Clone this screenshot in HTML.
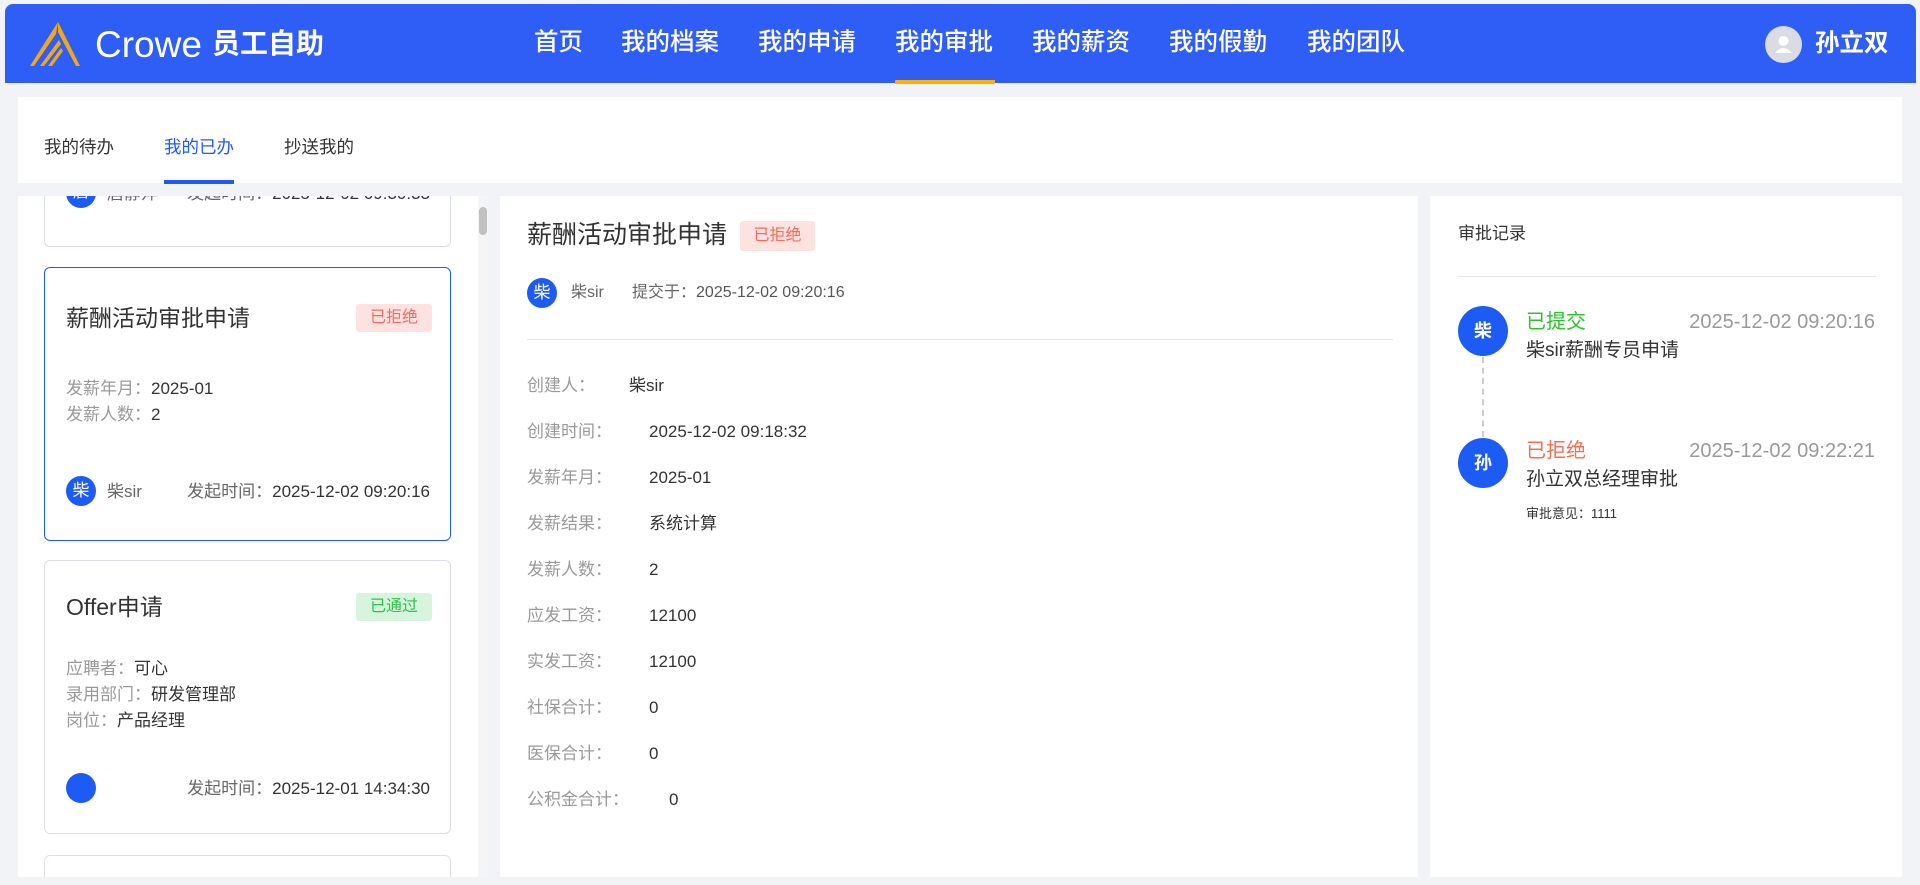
<!DOCTYPE html>
<html><head><meta charset="utf-8"><style>
*{margin:0;padding:0;box-sizing:border-box}
html,body{width:1920px;height:885px;overflow:hidden}
body{background:#f2f3f7;font-family:"Liberation Sans","Noto Sans CJK SC",sans-serif;position:relative;color:#333;line-height:1}
.a{position:absolute;white-space:nowrap}
.hdr{left:5px;top:4px;width:1911px;height:79px;background:#2f5ef7;border-radius:8px 8px 0 0}
.nav{top:31px;font-size:24.5px;color:#fff;font-weight:500}
.panel{background:#fff}
.lbl{color:#999;font-size:17px}
.val{color:#333;font-size:17px}
.av{border-radius:50%;background:#1c5cf5;color:#fff;text-align:center}
.card{border:1px solid #dcdfe6;border-radius:6px;background:#fff}
.badge{font-size:16px;text-align:center;border-radius:3px}
.f{font-size:17px;color:#999}
</style></head><body>
<div class="a hdr"></div>
<svg class="a" style="left:28px;top:20px" width="56" height="48" viewBox="0 0 56 48">
<path d="M30 2 L52 46 L48 46 L30 12 Z" fill="#f2a71b"/>
<path d="M30 2 L28 14 L6 46 L2 46 Z" fill="#f2a71b"/>
<path d="M31 20 L12 46 L16 46 L33 24Z" fill="#f2a71b"/>
<path d="M33 28 L20 46 L24 46 L35 31Z" fill="#f2a71b"/>
</svg>
<div class="a" style="left:95px;top:26px;font-size:37px;color:#fff;font-weight:300">Crowe</div>
<div class="a" style="left:212px;top:30px;font-size:28px;color:#fff;font-weight:bold">员工自助</div>
<div class="a nav" style="left:534px">首页</div>
<div class="a nav" style="left:621px">我的档案</div>
<div class="a nav" style="left:758px">我的申请</div>
<div class="a nav" style="left:895px">我的审批</div>
<div class="a nav" style="left:1032px">我的薪资</div>
<div class="a nav" style="left:1169px">我的假勤</div>
<div class="a nav" style="left:1307px">我的团队</div>
<div class="a" style="left:895px;top:80px;width:100px;height:4px;background:#f5b400"></div>
<div class="a av" style="left:1765px;top:26px;width:37px;height:37px;background:#d9dce3"><svg width="37" height="37" viewBox="0 0 37 37"><circle cx="18.5" cy="15" r="5" fill="#fff"/><path d="M10 27 Q18.5 17 27 27Z" fill="#fff"/></svg></div>
<div class="a" style="left:1815px;top:32px;font-size:24.5px;color:#fff;font-weight:bold">孙立双</div>

<div class="a panel" style="left:18px;top:97px;width:1884px;height:86px"></div>
<div class="a" style="left:44px;top:139px;font-size:17.5px">我的待办</div>
<div class="a" style="left:164px;top:139px;font-size:17.5px;color:#1c5cf5">我的已办</div>
<div class="a" style="left:164px;top:180px;width:70px;height:4px;background:#1c5cf5"></div>
<div class="a" style="left:284px;top:139px;font-size:17.5px">抄送我的</div>

<div class="a panel" style="left:18px;top:196px;width:470px;height:681px;overflow:hidden">
 <div class="a card" style="left:26px;top:-60px;width:407px;height:111px">
  <div class="a av" style="left:21px;top:41px;width:30px;height:30px;font-size:16px;line-height:30px">唐</div>
  <div class="a f" style="left:62px;top:48px;color:#666">唐静萍</div>
  <div class="a f" style="right:20px;top:48px;color:#666">发起时间：<span style="color:#333">2025-12-02 09:30:33</span></div>
 </div>
 <div class="a card" style="left:26px;top:71px;width:407px;height:274px;border-color:#1c5cf5">
  <div class="a" style="left:21px;top:39px;font-size:23px">薪酬活动审批申请</div>
  <div class="a badge" style="left:311px;top:36px;width:76px;height:28px;line-height:28px;background:#fde2e0;color:#f56c5c">已拒绝</div>
  <div class="a f" style="left:21px;top:112px">发薪年月：<span style="color:#333">2025-01</span></div>
  <div class="a f" style="left:21px;top:138px">发薪人数：<span style="color:#333">2</span></div>
  <div class="a av" style="left:21px;top:208px;width:30px;height:30px;font-size:17px;line-height:30px">柴</div>
  <div class="a f" style="left:62px;top:215px;color:#666">柴sir</div>
  <div class="a f" style="right:20px;top:215px;color:#666">发起时间：<span style="color:#333">2025-12-02 09:20:16</span></div>
 </div>
 <div class="a card" style="left:26px;top:364px;width:407px;height:274px">
  <div class="a" style="left:21px;top:35px;font-size:23px">Offer申请</div>
  <div class="a badge" style="left:311px;top:32px;width:76px;height:28px;line-height:28px;background:#d6f5dc;color:#2fc24c">已通过</div>
  <div class="a f" style="left:21px;top:99px">应聘者：<span style="color:#333">可心</span></div>
  <div class="a f" style="left:21px;top:125px">录用部门：<span style="color:#333">研发管理部</span></div>
  <div class="a f" style="left:21px;top:151px">岗位：<span style="color:#333">产品经理</span></div>
  <div class="a av" style="left:21px;top:212px;width:30px;height:30px"></div>
  <div class="a f" style="right:20px;top:219px;color:#666">发起时间：<span style="color:#333">2025-12-01 14:34:30</span></div>
 </div>
 <div class="a card" style="left:26px;top:659px;width:407px;height:100px"></div>
 <div class="a" style="left:460px;top:0;width:10px;height:681px;background:#f5f5f5"></div>
 <div class="a" style="left:461px;top:11px;width:8px;height:28px;background:#c1c1c1;border-radius:4px"></div>
</div>

<div class="a panel" style="left:500px;top:196px;width:918px;height:681px">
 <div class="a" style="left:27px;top:27px;font-size:25px">薪酬活动审批申请</div>
 <div class="a badge" style="left:240px;top:25px;width:75px;height:30px;line-height:30px;background:#fde2e0;color:#f56c5c">已拒绝</div>
 <div class="a av" style="left:27px;top:82px;width:30px;height:30px;font-size:17px;line-height:30px">柴</div>
 <div class="a" style="left:71px;top:89px;font-size:16px;color:#666">柴sir</div>
 <div class="a" style="left:132px;top:89px;font-size:16px;color:#666">提交于：<span style="color:#555">2025-12-02 09:20:16</span></div>
 <div class="a" style="left:27px;top:143px;width:866px;height:1px;background:#e4e7ed"></div>
 <div class="a lbl" style="left:27px;top:181px">创建人：</div><div class="a val" style="left:129px;top:181px">柴sir</div>
 <div class="a lbl" style="left:27px;top:227px">创建时间：</div><div class="a val" style="left:149px;top:227px">2025-12-02 09:18:32</div>
 <div class="a lbl" style="left:27px;top:273px">发薪年月：</div><div class="a val" style="left:149px;top:273px">2025-01</div>
 <div class="a lbl" style="left:27px;top:319px">发薪结果：</div><div class="a val" style="left:149px;top:319px">系统计算</div>
 <div class="a lbl" style="left:27px;top:365px">发薪人数：</div><div class="a val" style="left:149px;top:365px">2</div>
 <div class="a lbl" style="left:27px;top:411px">应发工资：</div><div class="a val" style="left:149px;top:411px">12100</div>
 <div class="a lbl" style="left:27px;top:457px">实发工资：</div><div class="a val" style="left:149px;top:457px">12100</div>
 <div class="a lbl" style="left:27px;top:503px">社保合计：</div><div class="a val" style="left:149px;top:503px">0</div>
 <div class="a lbl" style="left:27px;top:549px">医保合计：</div><div class="a val" style="left:149px;top:549px">0</div>
 <div class="a lbl" style="left:27px;top:595px">公积金合计：</div><div class="a val" style="left:169px;top:595px">0</div>
</div>

<div class="a panel" style="left:1430px;top:196px;width:472px;height:681px">
 <div class="a" style="left:28px;top:29px;font-size:17px">审批记录</div>
 <div class="a" style="left:28px;top:80px;width:418px;height:1px;background:#e4e7ed"></div>
 <div class="a av" style="left:28px;top:110px;width:50px;height:50px;font-size:18px;line-height:50px;font-weight:bold">柴</div>
 <div class="a" style="left:52px;top:161px;height:80px;border-left:2px dashed #ccc"></div>
 <div class="a" style="left:96px;top:116px;font-size:20px;color:#2fc22f">已提交</div>
 <div class="a" style="right:27px;top:116px;font-size:20px;color:#999">2025-12-02 09:20:16</div>
 <div class="a" style="left:96px;top:145px;font-size:19px;color:#333">柴sir薪酬专员申请</div>
 <div class="a av" style="left:28px;top:242px;width:50px;height:50px;font-size:18px;line-height:50px;font-weight:bold">孙</div>
 <div class="a" style="left:96px;top:245px;font-size:20px;color:#f5704f">已拒绝</div>
 <div class="a" style="right:27px;top:245px;font-size:20px;color:#999">2025-12-02 09:22:21</div>
 <div class="a" style="left:96px;top:274px;font-size:19px;color:#333">孙立双总经理审批</div>
 <div class="a" style="left:96px;top:311px;font-size:13px;color:#333">审批意见：1111</div>
</div>
</body></html>
